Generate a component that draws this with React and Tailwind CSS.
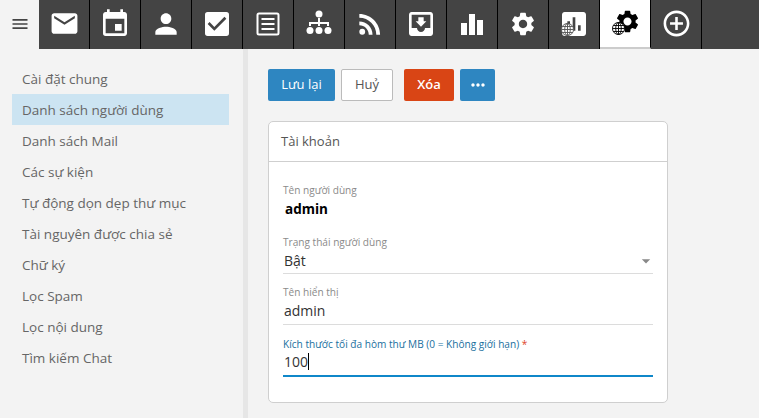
import React from "react";
import {
    MdEmail,
    MdEvent,
    MdPerson,
    MdCheckBox,
    MdRssFeed,
    MdMoveToInbox,
    MdAddCircleOutline,
    MdSettings,
    MdAssessment,
    MdMenu,
    MdMoreHoriz,
    MdArrowDropDown,
} from "react-icons/md";

// Small drawings the icon packages have no match for.
const ListBoxIcon = () => (
    <svg width="24" height="24" viewBox="0 0 24 24" fill="none" stroke="white">
        <rect x="1.5" y="1.5" width="21" height="21" rx="1.5" strokeWidth="2" />
        <path d="M5.5 7h13M5.5 12h13M5.5 17h13" strokeWidth="2" />
    </svg>
);

const OrgIcon = () => (
    <svg width="28" height="28" viewBox="0 0 28 28" fill="white">
        <circle cx="14" cy="4" r="3.5" />
        <path d="M13 8h2v4h9v4h-2v-2h-7v2h-2v-2H6v2H4v-4h9z" />
        <circle cx="5" cy="20.5" r="3.5" />
        <circle cx="14" cy="20.5" r="3.5" />
        <circle cx="23" cy="20.5" r="3.5" />
    </svg>
);

const BarsIcon = () => (
    <svg width="22" height="22" viewBox="0 0 22 22" fill="white">
        <rect x="0" y="10" width="6" height="12" />
        <rect x="8" y="1" width="6" height="21" />
        <rect x="16" y="7" width="6" height="15" />
    </svg>
);

const Globe = ({ color, bg }) => (
    <svg width="13" height="13" viewBox="0 0 14 14" fill="none" stroke={color} strokeWidth="1" className="absolute bottom-0 left-0">
        <circle cx="7" cy="7" r="6.5" fill={bg} />
        <ellipse cx="7" cy="7" rx="3" ry="6.5" />
        <path d="M7 .5v13M.5 7h13M1.5 3.8h11M1.5 10.2h11" />
    </svg>
);

const tabs = [
    <MdEmail size={31} color="white" />,
    <MdEvent size={32} color="white" />,
    <MdPerson size={32} color="white" />,
    <MdCheckBox size={32} color="white" />,
    <ListBoxIcon />,
    <OrgIcon />,
    <MdRssFeed size={32} color="white" />,
    <MdMoveToInbox size={32} color="white" />,
    <BarsIcon />,
    <MdSettings size={28} color="white" />,
    <div className="relative h-[25px] w-[27px]">
        <MdAssessment size={32} color="white" className="absolute -top-[3px] -right-[2px]" />
        <Globe color="#555555" bg="white" />
    </div>,
    <div className="relative h-[25px] w-[27px]">
        <MdSettings size={27} color="black" className="absolute -top-[2px] -right-[2px]" />
        <Globe color="black" bg="white" />
    </div>,
    <MdAddCircleOutline size={31} color="white" />,
];

const menu = [
    "Cài đặt chung",
    "Danh sách người dùng",
    "Danh sách Mail",
    "Các sự kiện",
    "Tự động dọn dẹp thư mục",
    "Tài nguyên được chia sẻ",
    "Chữ ký",
    "Lọc Spam",
    "Lọc nội dung",
    "Tìm kiếm Chat",
];

const Field = ({ label, value, className, valueHeight, children }) => (
    <div className={className}>
        <div className="text-[10.1px] leading-[14px] text-[#8a8a8a]">{label}</div>
        <div className={`relative ${valueHeight} border-b border-[#dcdcdc] pl-[1px] text-[14px] leading-[24px] text-[#333]`}>
            {value}
            {children}
        </div>
    </div>
);

const App = () => {
    return (
        <div className="flex h-[418px] w-[759px] flex-col overflow-hidden bg-[#f3f3f3] font-['Open_Sans','Noto_Sans',sans-serif]">
            {/* Top toolbar */}
            <div className="flex h-[49px] shrink-0">
                <div className="flex w-[39px] items-center justify-center pb-[2px]">
                    <MdMenu size={20} color="#444" />
                </div>
                <div className="flex flex-1 bg-[#444444]">
                    {tabs.map((icon, i) => (
                        <div
                            key={i}
                            className={
                                i === 11
                                    ? "flex h-[49px] w-[51px] items-center justify-center border-r border-b-2 border-r-black border-b-[#cccccc] bg-white pb-[2px]"
                                    : "flex h-[49px] w-[51px] items-center justify-center border-r border-black pb-[2px]"
                            }
                        >
                            {icon}
                        </div>
                    ))}
                </div>
            </div>

            <div className="flex flex-1">
                {/* Left menu */}
                <div className="w-[248px] shrink-0 border-r-[5px] border-[#e6e6e6] pt-[14px] pl-[12px]">
                    {menu.map((item, i) => (
                        <div
                            key={item}
                            className={
                                i === 1
                                    ? "h-[31px] w-[217px] bg-[#cce4f2] pl-[10px] text-[13.5px] leading-[33px] text-[#666]"
                                    : "h-[31px] w-[217px] pl-[10px] text-[13.5px] leading-[33px] text-[#666]"
                            }
                        >
                            {item}
                        </div>
                    ))}
                </div>

                {/* Main form */}
                <div className="flex-1 pt-[20px] pl-[20px]">
                    <div className="flex h-[32px] text-[13px]">
                        <button className="w-[67px] rounded-[2px] bg-[#2e86c1] text-white">Lưu lại</button>
                        <button className="ml-[6px] w-[52px] rounded-[2px] border border-[#bbb] bg-white text-[#555]">Huỷ</button>
                        <button className="ml-[11px] w-[50px] rounded-[2px] bg-[#d94515] font-semibold text-white">Xóa</button>
                        <button className="ml-[6px] flex w-[35px] items-center justify-center rounded-[2px] bg-[#2e86c1] text-white">
                            <MdMoreHoriz size={20} />
                        </button>
                    </div>

                    <div className="mt-[20px] h-[282px] w-[400px] rounded-[5px] border border-[#cfcfcf] bg-white">
                        <div className="h-[40px] border-b border-[#cfcfcf] pl-[12px] text-[13px] leading-[39px] text-[#555]">Tài khoản</div>
                        <div className="px-[14px] pt-[21px]">
                            <div className="text-[10.1px] leading-[14px] text-[#8a8a8a]">Tên người dùng</div>
                            <div className="pt-[1px] pl-[2px] text-[13.5px] leading-[22px] font-bold text-black">admin</div>
                            <Field label="Trạng thái người dùng" value="Bật" className="mt-[15px]" valueHeight="h-[25px]">
                                <MdArrowDropDown size={20} color="#888" className="absolute top-[2px] right-[-3px]" />
                            </Field>
                            <Field label="Tên hiển thị" value="admin" className="mt-[11px]" valueHeight="h-[26px]" />
                            <div className="mt-[12px]">
                                <div className="text-[10.1px] leading-[14px] text-[#1a6f9e]">
                                    Kích thước tối đa hòm thư MB (0 = Không giới hạn) <span className="text-[#e0452a]">*</span>
                                </div>
                                <div className="flex h-[26px] items-center border-b-2 border-[#0f87c9] pb-[4px] pl-[1px] text-[14px] text-[#333]">
                                    100<span className="h-[17px] w-px bg-black" />
                                </div>
                            </div>
                        </div>
                    </div>
                </div>
            </div>
        </div>
    );
};

export default App;
